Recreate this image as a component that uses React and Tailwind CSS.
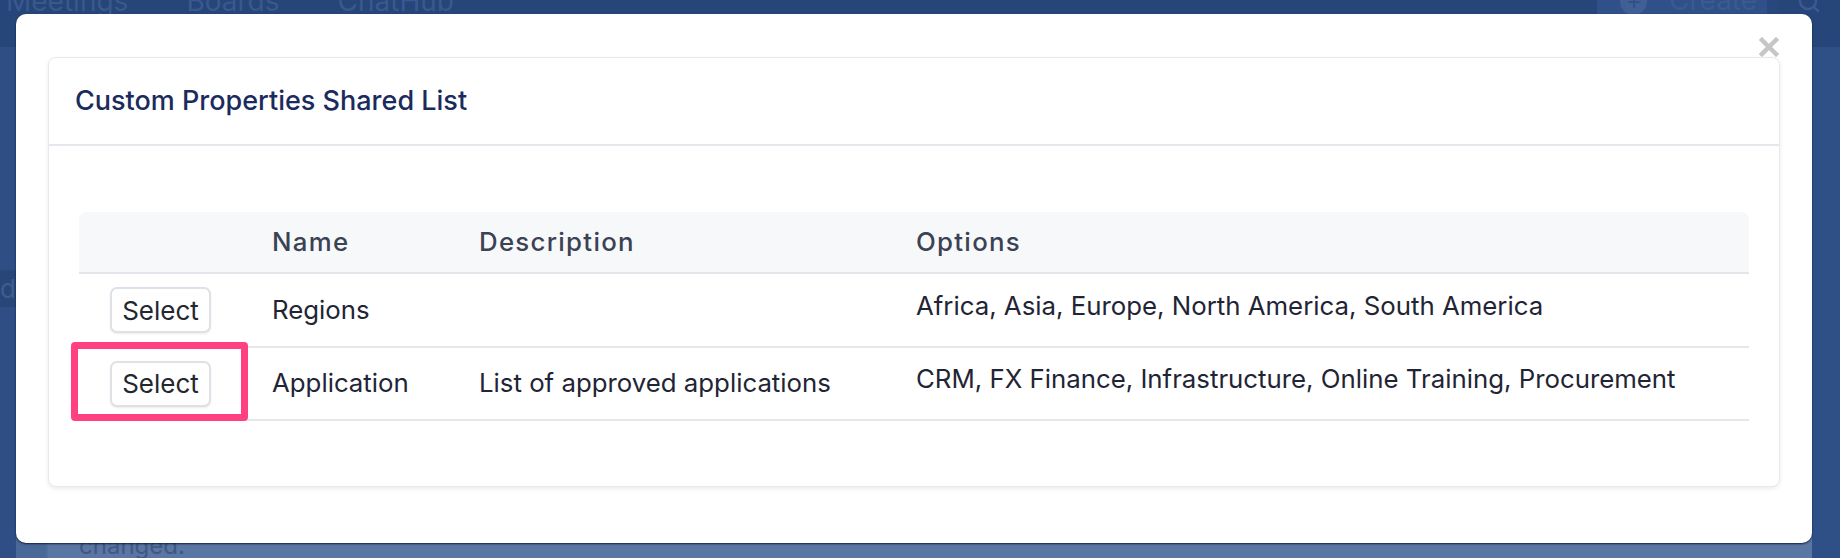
import { Search, Plus } from 'lucide-react'

const rows = [
  { name: 'Regions', description: '', options: 'Africa, Asia, Europe, North America, South America' },
  { name: 'Application', description: 'List of approved applications', options: 'CRM, FX Finance, Infrastructure, Online Training, Procurement' },
]

function PageBehind() {
  return (
    <div className="flex flex-col w-full h-full">
      {/* nav bar, dimmed by the overlay */}
      <div className="h-[47px] bg-[#264579] flex items-start">
        <div className="flex gap-[58px] pl-[6px] -mt-[15px] text-[28px] leading-[32px] text-[#3a588e]">
          <span>Meetings</span>
          <span>Boards</span>
          <span>ChatHub</span>
        </div>
        <div className="ml-auto flex items-start h-[30px]">
          <div className="w-[170px] h-[30px] bg-[#2f5088] flex items-start gap-[22px] pl-[23px]">
            <div className="w-[27px] h-[27px] -mt-[12px] rounded-full bg-[#3f5f95] flex items-center justify-center">
              <Plus className="w-[16px] h-[16px] text-[#2f5088]" strokeWidth={3} />
            </div>
            <span className="-mt-[16px] text-[28px] leading-[32px] text-[#3b5a8f]">Create</span>
          </div>
          <div className="w-[10px] h-[30px] bg-[#28477c]" />
          <div className="w-[63px] h-[30px] flex justify-center">
            <Search className="w-[24px] h-[24px] -mt-[10px] text-[#3b5a8f]" strokeWidth={2.5} />
          </div>
        </div>
      </div>
      <div className="flex-1 flex">
        <div className="w-[16px] bg-[#2e4e85] flex flex-col">
          <div className="h-[223px]" />
          <div className="h-[37px] bg-[#284677] text-[26px] leading-[37px] text-[#3f5d92] overflow-hidden">d</div>
        </div>
        <div className="flex-1 flex flex-col bg-gradient-to-b from-[#2f4f86] to-[#4b6998]">
          <div className="flex-1" />
          <div className="h-[40px] bg-[#5a76a2] border-l-2 border-[#50709c] ml-[30px] pl-[31px] pt-[15px] text-[24px] leading-[26px] text-[#3f5884]">
            changed.
          </div>
        </div>
        <div className="w-[28px] bg-[#2f5087]" />
      </div>
    </div>
  )
}

function App() {
  return (
    <div className="relative w-[1840px] h-[558px] overflow-hidden bg-[#2f4f86] font-['Inter',sans-serif]">
      <PageBehind />

      {/* modal */}
      <div className="absolute left-[16px] top-[14px] w-[1796px] h-[529px] bg-white rounded-[10px] shadow-[0_1px_2px_rgba(10,25,55,0.9)] pt-[43px] px-[32px] pb-[56px]">
        <button className="absolute right-[33px] top-[23px] w-[20px] h-[20px] text-[#c6c6c6]">
          <svg viewBox="0 0 20 20" className="w-full h-full" fill="none" stroke="currentColor" strokeWidth="4.5" strokeLinecap="square">
            <path d="M3 3 L17 17 M17 3 L3 17" />
          </svg>
        </button>

        <div className="h-full bg-white rounded-[8px] border border-[#e7e9ee] shadow-[0_2px_4px_rgba(0,0,0,0.08)] flex flex-col">
          <div className="h-[88px] border-b-2 border-[#e6e6ec] flex items-center pl-[26px]">
            <h2 className="text-[27px] font-medium text-[#1a2b5c]">Custom Properties Shared List</h2>
          </div>

          <div className="pt-[66px] px-[30px]">
            <table className="w-full table-fixed border-collapse">
              <colgroup>
                <col className="w-[173px]" />
                <col className="w-[207px]" />
                <col className="w-[437px]" />
                <col />
              </colgroup>
              <thead>
                <tr className="h-[61px] bg-[#f7f8fa] border-b-2 border-[#e4e5ea]">
                  <th className="rounded-tl-[8px]" />
                  <th className="text-left pl-[20px] text-[25.8px] font-medium tracking-[0.05em] text-[#3a4254]">Name</th>
                  <th className="text-left pl-[20px] text-[25.8px] font-medium tracking-[0.05em] text-[#3a4254]">Description</th>
                  <th className="text-left pl-[20px] text-[25.8px] font-medium tracking-[0.05em] text-[#3a4254] rounded-tr-[8px]">Options</th>
                </tr>
              </thead>
              <tbody>
                {rows.map((r, i) => (
                  <tr key={r.name} className={`${i === 0 ? 'h-[74px]' : 'h-[73px]'} border-b-2 border-[#e6e7ec]`}>
                    <td className="pl-[31px] align-middle">
                      <button className="w-[101px] h-[46px] bg-white border-2 border-[#e0e1e6] rounded-[7px] shadow-[0_1px_2px_rgba(0,0,0,0.08)] text-[26px] text-[#23272f]">
                        Select
                      </button>
                    </td>
                    <td className="pl-[20px] text-[25.8px] text-[#1f2535]">{r.name}</td>
                    <td className="pl-[20px] text-[25.8px] text-[#1f2535]">{r.description}</td>
                    <td className="pl-[20px] pb-[8px] text-[25.8px] text-[#1f2535] whitespace-nowrap">{r.options}</td>
                  </tr>
                ))}
              </tbody>
            </table>
          </div>
        </div>
      </div>

      {/* highlight annotation */}
      <div className="absolute left-[71px] top-[342px] w-[177px] h-[79px] border-[7px] border-[#ff4081] rounded-[4px]" />
    </div>
  )
}

export default App
